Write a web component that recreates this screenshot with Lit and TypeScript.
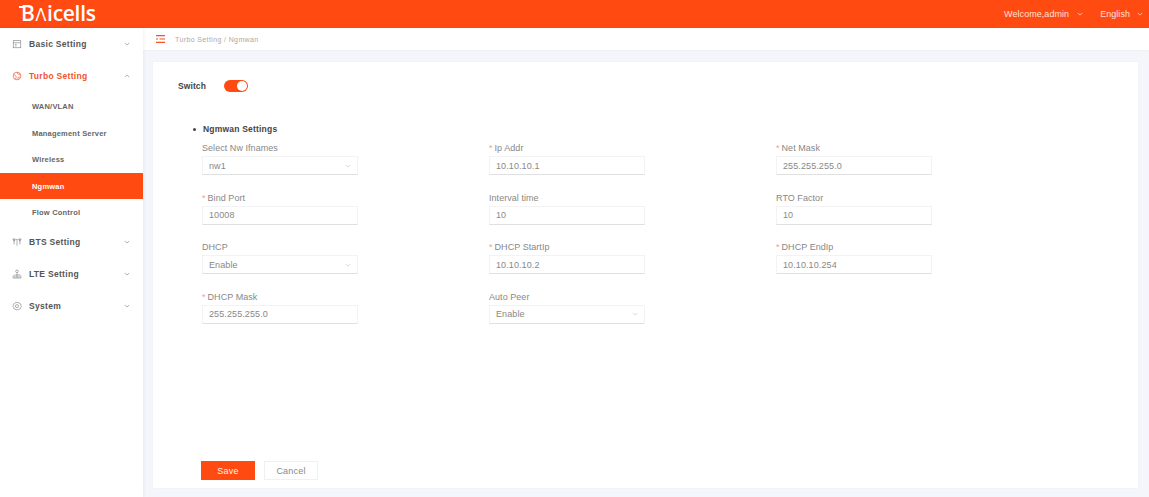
import { css, html, LitElement, svg } from "lit";
import { customElement } from "lit/decorators.js";

const ICONS: Record<string, unknown> = {
	basic: svg`<rect x="1.5" y="2" width="9" height="8.5" /><path d="M1.5 4.5h9M3.5 6.5h2M3.5 8.3h2" />`,
	turbo: svg`<circle cx="6" cy="6" r="4.6" /><path d="M2 4.5c2 .2 2.6 1.2 3 2.2.3 1-.4 1.6-1 3M6.5 1.5c-.4 1.4.3 2.2 1.4 2.4 1 .2 2 .1 2.6.6M10 7.6c-1-.6-2.3-.6-2.8.3-.3.7 0 1.5.3 2.2" />`,
	bts: svg`<path d="M2.5 2v7M9.5 2v7M1 2.5 2.5 5 4 2.5zM8 2.5 9.5 5 11 2.5z" /><path d="M6 4v6.5M4.8 4a1.200 1.200 0 0 1 2.400 0" />`,
	lte: svg`<circle cx="6" cy="2.800" r="1.600" /><path d="M1.500 10.500v-3M3.500 10.500v-4M8.500 10.500v-4.500M10.500 10.500v-3M5.200 10.500v-4.500h1.600v4.500M.8 10.800h10.400" />`,
	system: svg`<path d="M6 1.200l1.200 1 1.500-.2.800 1.300 1.400.7-.3 1.500.7 1.300-1 1.100-.2 1.500-1.500.3-1 1.100-1.400-.5-1.400.5-1-1.100-1.500-.3-.2-1.500-1-1.100.7-1.300-.3-1.500 1.400-.7.800-1.300 1.500.2z" /><circle cx="6" cy="6.200" r="1.900" />`,
};

const chevron = (up = false) => html`<svg class="chev" viewBox="0 0 8 5">
	<path d=${up ? "M1 4l3-3 3 3" : "M1 1l3 3 3-3"} />
</svg>`;

type Field = {
	label: string;
	value: string;
	required?: boolean;
	select?: boolean;
};

const FIELDS: Field[] = [
	{ label: "Select Nw Ifnames", value: "nw1", select: true },
	{ label: "Ip Addr", value: "10.10.10.1", required: true },
	{ label: "Net Mask", value: "255.255.255.0", required: true },
	{ label: "Bind Port", value: "10008", required: true },
	{ label: "Interval time", value: "10" },
	{ label: "RTO Factor", value: "10" },
	{ label: "DHCP", value: "Enable", select: true },
	{ label: "DHCP StartIp", value: "10.10.10.2", required: true },
	{ label: "DHCP EndIp", value: "10.10.10.254", required: true },
	{ label: "DHCP Mask", value: "255.255.255.0", required: true },
	{ label: "Auto Peer", value: "Enable", select: true },
];

const SUBMENU = ["WAN/VLAN", "Management Server", "Wireless", "Ngmwan", "Flow Control"];

@customElement("app-root")
export class AppRoot extends LitElement {
	static override styles = css`
		:host {
			display: flex;
			flex-direction: column;
			height: 100vh;
			overflow: hidden;
			background: #f5f6fb;
			font-family: "Liberation Sans", Arial, sans-serif;
			color: #555;
		}
		.top {
			flex: none;
			height: 28px;
			background: #ff4a12;
			display: flex;
			align-items: center;
			color: #ffe0d4;
			font-size: 9px;
			letter-spacing: 0.05px;
		}
		.logo {
			margin: 0 0 2px 21px;
			color: #fff;
			font-family: "Open Sans", sans-serif;
			font-size: 21px;
			font-weight: 600;
			letter-spacing: -0.3px;
			line-height: 26px;
			display: flex;
			align-items: baseline;
			position: relative;
		}
		.logo::before {
			content: "";
			position: absolute;
			left: -2px;
			top: 6px;
			width: 4px;
			height: 2px;
			background: #fff;
		}
		.logo span {
			font-size: 18px;
			font-weight: 400;
			margin: 0 1px;
		}
		.top-right {
			margin-left: auto;
			display: flex;
			align-items: center;
		}
		.top-right .chev {
			stroke: #ffd9cb;
			margin-left: 8px;
		}
		.lang {
			margin-left: 17px;
			margin-right: 6px;
			display: flex;
			align-items: center;
		}
		.lang .chev {
			margin-left: 7px;
		}
		.main {
			flex: 1;
			display: flex;
			min-height: 0;
		}
		.side {
			flex: none;
			width: 143px;
			background: #fff;
			box-shadow: 1px 0 3px rgba(0, 0, 0, 0.05);
			z-index: 1;
		}
		.group {
			height: 32px;
			display: flex;
			align-items: center;
			padding: 0 13px 0 12px;
			font-size: 8.5px;
			font-weight: 700;
			letter-spacing: 0.3px;
			color: #555;
		}
		.group.on {
			color: #f0552a;
		}
		.group .ico {
			width: 10px;
			height: 10px;
			margin-right: 7px;
			fill: none;
			stroke: #888;
			stroke-width: 0.8;
		}
		.group.on .ico {
			stroke: #f0552a;
		}
		.group .chev {
			margin-left: auto;
		}
		.chev {
			width: 6px;
			height: 4px;
			fill: none;
			stroke: #999;
			stroke-width: 1;
		}
		.sub {
			padding-top: 1px;
		}
		.sub div {
			height: 26.5px;
			line-height: 27px;
			padding-left: 32px;
			font-size: 7.5px;
			font-weight: 700;
			letter-spacing: 0.2px;
			color: #666;
		}
		.sub .on {
			background: #ff4a12;
			color: #fff;
		}
		.content {
			flex: 1;
			min-width: 0;
			display: flex;
			flex-direction: column;
		}
		.crumb {
			flex: none;
			height: 22px;
			background: #fff;
			display: flex;
			align-items: center;
			padding-left: 13px;
			font-size: 7px;
			letter-spacing: 0.38px;
			color: #aaa;
			box-shadow: 0 1px 2px rgba(0, 0, 0, 0.03);
		}
		.crumb svg {
			width: 9px;
			height: 8px;
			margin-right: 10px;
			fill: #f0552a;
		}
		.card {
			flex: 1;
			margin: 12px 11px 9px 10px;
			background: #fff;
			padding: 18px 0 8px 25px;
			display: flex;
			flex-direction: column;
			box-shadow: 0 0 2px rgba(0, 0, 0, 0.04);
		}
		.switch-row {
			display: flex;
			align-items: center;
			height: 12px;
			font-size: 8.5px;
			font-weight: 700;
			letter-spacing: 0.1px;
			color: #444;
		}
		.toggle {
			margin-left: 18px;
			width: 24px;
			height: 12px;
			border-radius: 6px;
			background: #ff4a12;
			display: flex;
			justify-content: flex-end;
			align-items: center;
			padding-right: 1px;
			box-sizing: border-box;
		}
		.toggle i {
			width: 10px;
			height: 10px;
			border-radius: 50%;
			background: #fff;
		}
		.section {
			margin: 31px 0 0 15px;
			display: flex;
			align-items: center;
			height: 12px;
			font-size: 8.5px;
			font-weight: 700;
			letter-spacing: 0.2px;
			color: #444;
		}
		.section::before {
			content: "";
			width: 3px;
			height: 3px;
			border-radius: 50%;
			background: #444;
			margin-right: 7px;
		}
		.form {
			margin: 6px 0 0 24px;
			display: grid;
			grid-template-columns: repeat(3, 287px);
			grid-auto-rows: 49.5px;
		}
		.label {
			height: 15px;
			line-height: 14px;
			font-size: 9px;
			letter-spacing: 0.05px;
			color: #888;
		}
		.label b {
			font-weight: 400;
			color: #eba48c;
			margin-right: 2px;
		}
		.box {
			width: 156px;
			height: 19px;
			box-sizing: border-box;
			border: 1px solid #f3f3f3;
			border-bottom-color: #e0e0e0;
			display: flex;
			align-items: center;
			justify-content: space-between;
			padding: 0 6px;
			font-size: 9px;
			letter-spacing: 0.1px;
			color: #888;
		}
		.box .chev {
			stroke: #ccc;
		}
		.actions {
			margin: auto 0 0 23px;
			display: flex;
			gap: 9px;
		}
		.btn {
			width: 54px;
			height: 19px;
			box-sizing: border-box;
			display: flex;
			align-items: center;
			justify-content: center;
			font-size: 9px;
			letter-spacing: 0.2px;
			background: #ff4a12;
			color: #ffeee8;
		}
		.btn.ghost {
			background: #fff;
			color: #888;
			border: 1px solid #f0f0f0;
		}
	`;

	private group(icon: string, label: string, on = false) {
		return html`<div class="group ${on ? "on" : ""}">
			<svg class="ico" viewBox="0 0 12 12">${ICONS[icon]}</svg>
			${label} ${chevron(on)}
		</div>`;
	}

	override render() {
		return html`
			<div class="top">
				<div class="logo">B<span>Λ</span>icells</div>
				<div class="top-right">
					Welcome,admin ${chevron()}
					<div class="lang">English ${chevron()}</div>
				</div>
			</div>
			<div class="main">
				<nav class="side">
					${this.group("basic", "Basic Setting")}
					${this.group("turbo", "Turbo Setting", true)}
					<div class="sub">
						${SUBMENU.map(
							(s) => html`<div class=${s === "Ngmwan" ? "on" : ""}>${s}</div>`,
						)}
					</div>
					${this.group("bts", "BTS Setting")}
					${this.group("lte", "LTE Setting")}
					${this.group("system", "System")}
				</nav>
				<div class="content">
					<div class="crumb">
						<svg viewBox="0 0 9 8">
							<path
								d="M0 0h9v1.2H0zM0 3.4h2v1.2H0zM3.5 3.4H9v1.2H3.5zM0 6.8h9V8H0z"
							/>
						</svg>
						Turbo Setting / Ngmwan
					</div>
					<div class="card">
						<div class="switch-row">
							Switch
							<div class="toggle"><i></i></div>
						</div>
						<div class="section">Ngmwan Settings</div>
						<div class="form">
							${FIELDS.map(
								(f) => html`<div>
									<div class="label">
										${f.required ? html`<b>*</b>` : ""}${f.label}
									</div>
									<div class="box">
										${f.value} ${f.select ? chevron() : ""}
									</div>
								</div>`,
							)}
						</div>
						<div class="actions">
							<div class="btn">Save</div>
							<div class="btn ghost">Cancel</div>
						</div>
					</div>
				</div>
			</div>
		`;
	}
}
